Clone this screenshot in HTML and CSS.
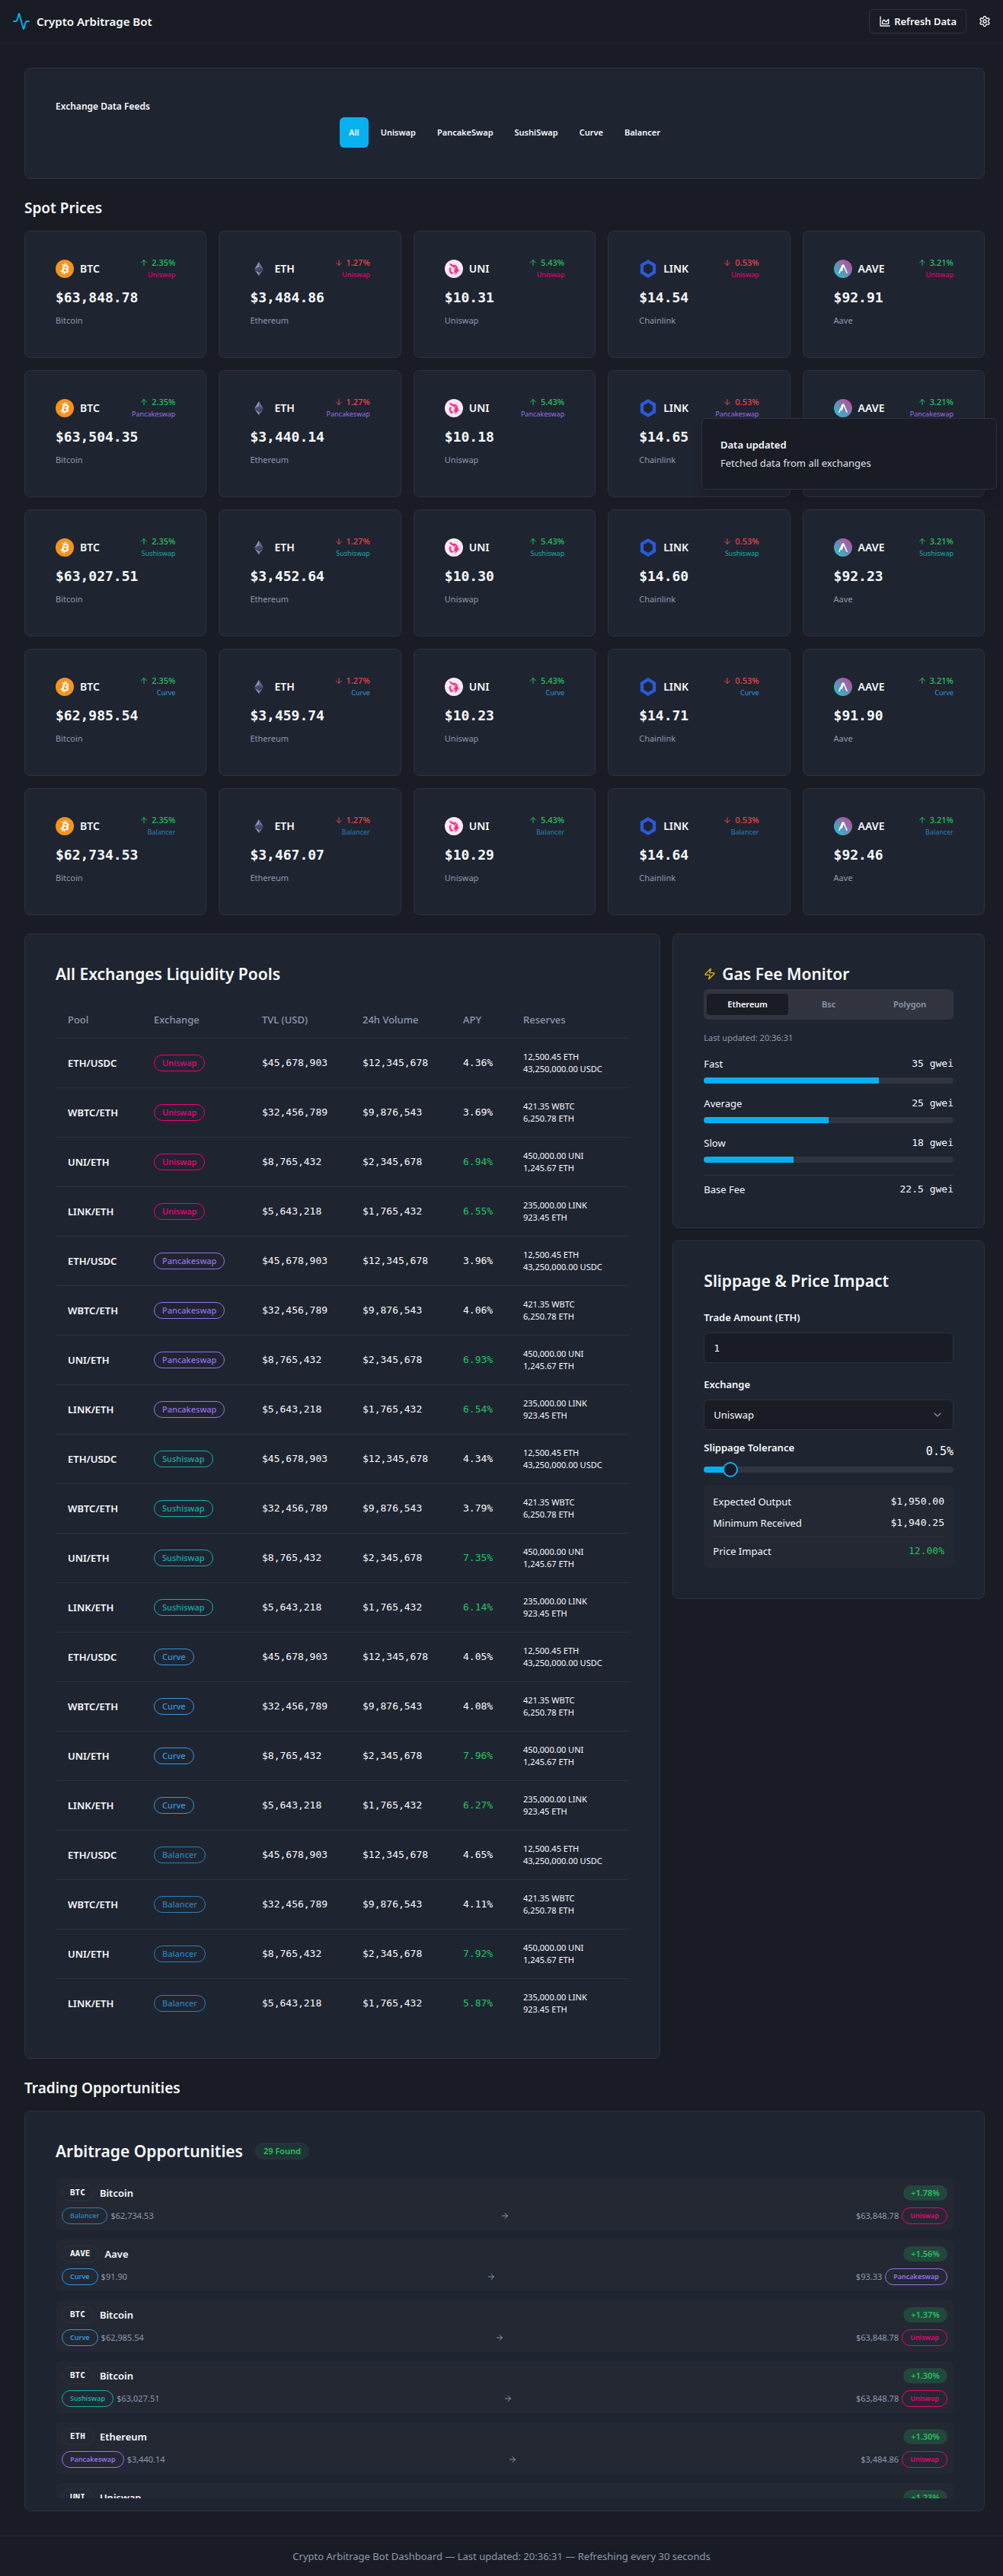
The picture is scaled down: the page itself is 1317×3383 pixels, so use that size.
FILE: index.html
```html
<!DOCTYPE html>
<html lang="en">
<head>
<meta charset="utf-8">
<meta name="viewport" content="width=device-width, initial-scale=1">
<title>Crypto Arbitrage Bot</title>
<link rel="stylesheet" href="styles.css">
</head>
<body>
<svg class="sprite" aria-hidden="true">
  <defs>
    <linearGradient id="aave-fill" x1="0.15" y1="0.85" x2="0.85" y2="0.15">
      <stop offset="0" stop-color="#2ebac6"/><stop offset="1" stop-color="#b6509e"/>
    </linearGradient>
  </defs>
  <symbol id="coin-btc" viewBox="0 0 32 32">
    <circle cx="16" cy="16" r="16" fill="#f7931a"/>
    <path fill="#fff" d="M23.189 14.02c.314-2.096-1.283-3.223-3.465-3.975l.708-2.84-1.728-.43-.69 2.765c-.454-.114-.92-.22-1.385-.326l.695-2.783L15.596 6l-.708 2.839c-.376-.086-.746-.17-1.104-.26l.002-.009-2.384-.595-.46 1.846s1.283.294 1.256.312c.7.175.826.638.805 1.006l-.806 3.235c.048.012.11.03.18.057l-.183-.045-1.13 4.532c-.086.212-.303.531-.793.41.018.025-1.256-.313-1.256-.313l-.858 1.978 2.25.561c.418.105.828.215 1.231.318l-.715 2.872 1.727.43.708-2.84c.472.127.93.245 1.378.357l-.706 2.828 1.728.43.715-2.866c2.948.558 5.164.333 6.097-2.333.752-2.146-.037-3.385-1.588-4.192 1.13-.26 1.98-1.003 2.207-2.538zm-3.95 5.538c-.533 2.147-4.148.986-5.32.695l.95-3.805c1.172.293 4.929.872 4.37 3.11zm.535-5.569c-.487 1.953-3.495.96-4.47.717l.86-3.45c.975.243 4.118.696 3.61 2.733z"/>
  </symbol>
  <symbol id="coin-eth" viewBox="0 0 24 24">
    <path fill="#8a92b2" d="M12 2.7 6.3 12.2 12 15.6z"/>
    <path fill="#62688f" d="m12 2.7 5.7 9.5-5.7 3.4z"/>
    <path fill="#454a75" d="m6.3 12.2 5.7-2.6 5.7 2.6-5.7 3.4z"/>
    <path fill="#8a92b2" d="m6.3 13.3 5.7 8v-4.6z"/>
    <path fill="#62688f" d="m17.7 13.3-5.7 8v-4.6z"/>
  </symbol>
  <symbol id="coin-uni" viewBox="0 0 24 24">
    <circle cx="12" cy="12" r="12" fill="#ffeaf4"/>
    <path fill="#ff2d87" d="M5.5 4.8c3 .9 4.200 1.200 5.800 2.400 1.300-.7 3-.4 3.700.5 1.600.7 2.100 2.200 2 3.800l1.600 3.300-1.200 1.200-1.100-.2c.3 2.300-1.500 3.900-3.800 4.200 1.300-1 1.900-2.200 1.400-3.500-1 1.300-2.700 1.700-4 .9 1.800-.1 3.100-1 3.100-2.500l-2.300.3 2.800-2.100c-.6-2.700-2.500-4.100-4.700-4.300C7.600 8 6.600 6.700 5.500 4.800z"/>
    <path fill="#ff2d87" d="M7 10.200c.9 0 1.600.3 2.100.9-.9.500-1.300 1.400-1.100 2.600.3 1.900 1.600 3 3.400 3.300-.4 1.300-1.500 2-3 1.900-1.500-1-2.300-2.500-2.300-4.300-.6-.6-.6-1.500-.2-2.100z"/>
    <path fill="#ffeaf4" d="m13.200 9.200 1.700.6.300 1-1.600-.3z"/>
  </symbol>
  <symbol id="coin-link" viewBox="0 0 24 24">
    <path fill="none" stroke="#2a5ada" stroke-width="4.300" d="M12 2.500 20 7.200v9.600l-8 4.700-8-4.700V7.200z"/>
  </symbol>
  <symbol id="coin-aave" viewBox="0 0 24 24">
    <circle cx="12" cy="12" r="12" fill="url(#aave-fill)"/>
    <path fill="none" stroke="#fff" stroke-width="1.600" stroke-linecap="round" d="M7 17.200 11.300 7.300h1.400L17 17.200M8 13.600h2.800M12 8.500l-1.900 6"/>
  </symbol>
  <symbol id="i-up" viewBox="0 0 24 24"><path d="m5 12 7-7 7 7M12 19V5"/></symbol>
  <symbol id="i-down" viewBox="0 0 24 24"><path d="M12 5v14M19 12l-7 7-7-7"/></symbol>
  <symbol id="i-right" viewBox="0 0 24 24"><path d="M5 12h14M12 5l7 7-7 7"/></symbol>
</svg>

<header class="topbar">
  <div class="brand">
    <svg class="icon icon-24" viewBox="0 0 24 24" aria-hidden="true"><path d="M22 12h-2.480a2 2 0 0 0-1.930 1.460l-2.350 8.360a.25.25 0 0 1-.48 0L9.240 2.180a.25.25 0 0 0-.48 0l-2.350 8.360A2 2 0 0 1 4.490 12H2"/></svg>
    <h1>Crypto Arbitrage Bot</h1>
  </div>
  <div class="actions">
    <button class="btn-outline" type="button">
      <svg class="icon icon-16" viewBox="0 0 24 24" aria-hidden="true"><path d="M3 3v18h18"/><path d="M7 12v5h12V8l-5 5-4-4Z"/></svg>
      Refresh Data
    </button>
    <button class="btn-icon" type="button" aria-label="Settings">
      <svg class="icon icon-16" viewBox="0 0 24 24" aria-hidden="true"><path d="M12.220 2h-.44a2 2 0 0 0-2 2v.18a2 2 0 0 1-1 1.730l-.43.25a2 2 0 0 1-2 0l-.15-.08a2 2 0 0 0-2.730.73l-.22.38a2 2 0 0 0 .73 2.730l.15.1a2 2 0 0 1 1 1.720v.51a2 2 0 0 1-1 1.740l-.15.09a2 2 0 0 0-.73 2.730l.22.38a2 2 0 0 0 2.730.73l.15-.08a2 2 0 0 1 2 0l.43.25a2 2 0 0 1 1 1.730V20a2 2 0 0 0 2 2h.44a2 2 0 0 0 2-2v-.18a2 2 0 0 1 1-1.730l.43-.25a2 2 0 0 1 2 0l.15.08a2 2 0 0 0 2.730-.73l.22-.39a2 2 0 0 0-.73-2.730l-.15-.08a2 2 0 0 1-1-1.740v-.5a2 2 0 0 1 1-1.740l.15-.09a2 2 0 0 0 .73-2.730l-.22-.38a2 2 0 0 0-2.730-.73l-.15.08a2 2 0 0 1-2 0l-.43-.25a2 2 0 0 1-1-1.730V4a2 2 0 0 0-2-2z"/><circle cx="12" cy="12" r="3"/></svg>
    </button>
  </div>
</header>

<main class="page">
  <section class="card feeds">
    <h2 class="feeds-title">Exchange Data Feeds</h2>
    <div class="feed-tabs">
      <button class="feed-tab active" type="button">All</button>
      <button class="feed-tab" type="button">Uniswap</button>
      <button class="feed-tab" type="button">PancakeSwap</button>
      <button class="feed-tab" type="button">SushiSwap</button>
      <button class="feed-tab" type="button">Curve</button>
      <button class="feed-tab" type="button">Balancer</button>
    </div>
  </section>

  <section class="block">
    <h2 class="section-title">Spot Prices</h2>
    <div class="spot-grid" id="spots"></div>
  </section>

  <div class="columns">
    <section class="card pools">
      <h3 class="card-title">All Exchanges Liquidity Pools</h3>
      <table class="pool-table">
        <colgroup><col class="c-pool"><col class="c-exchange"><col class="c-usd"><col class="c-usd"><col class="c-apy"><col></colgroup>
        <thead><tr><th>Pool</th><th>Exchange</th><th>TVL (USD)</th><th>24h Volume</th><th>APY</th><th>Reserves</th></tr></thead>
        <tbody id="pools"></tbody>
      </table>
    </section>

    <div class="side">
      <section class="card gas">
        <h3 class="card-title with-icon">
          <svg class="icon icon-16 zap" viewBox="0 0 24 24" aria-hidden="true"><path d="M4 14a1 1 0 0 1-.78-1.630l9.900-10.200a.5.5 0 0 1 .86.46l-1.920 6.020A1 1 0 0 0 13 10h7a1 1 0 0 1 .78 1.630l-9.900 10.200a.5.5 0 0 1-.86-.46l1.920-6.020A1 1 0 0 0 11 14z"/></svg>
          Gas Fee Monitor
        </h3>
        <div class="gas-tabs">
          <button class="gas-tab active" type="button">Ethereum</button>
          <button class="gas-tab" type="button">Bsc</button>
          <button class="gas-tab" type="button">Polygon</button>
        </div>
        <p class="updated">Last updated: 20:36:31</p>
        <div class="gas-rows">
          <div class="gas-row"><div class="kv"><span>Fast</span><span class="mono">35 gwei</span></div><div class="bar"><div class="bar-fill" style="width:70%"></div></div></div>
          <div class="gas-row"><div class="kv"><span>Average</span><span class="mono">25 gwei</span></div><div class="bar"><div class="bar-fill" style="width:50%"></div></div></div>
          <div class="gas-row"><div class="kv"><span>Slow</span><span class="mono">18 gwei</span></div><div class="bar"><div class="bar-fill" style="width:36%"></div></div></div>
          <div class="kv kv-total"><span>Base Fee</span><span class="mono">22.5 gwei</span></div>
        </div>
      </section>

      <section class="card slippage">
        <h3 class="card-title">Slippage &amp; Price Impact</h3>
        <div class="form">
          <div class="field">
            <label for="amount">Trade Amount (ETH)</label>
            <input class="control mono" id="amount" type="text" inputmode="decimal" value="1">
          </div>
          <div class="field">
            <label for="exchange">Exchange</label>
            <div class="select-wrap">
              <select class="control" id="exchange"><option>Uniswap</option><option>PancakeSwap</option><option>SushiSwap</option><option>Curve</option><option>Balancer</option></select>
              <svg class="icon icon-16 chevron" viewBox="0 0 24 24" aria-hidden="true"><path d="m6 9 6 6 6-6"/></svg>
            </div>
          </div>
          <div class="field">
            <div class="tolerance"><label for="tolerance">Slippage Tolerance</label><output class="mono" for="tolerance">0.5%</output></div>
            <input class="slider" id="tolerance" type="range" min="0.1" max="5" step="0.1" value="0.5">
          </div>
          <div class="summary">
            <div class="kv"><span>Expected Output</span><span class="mono">$1,950.00</span></div>
            <div class="kv"><span>Minimum Received</span><span class="mono">$1,940.25</span></div>
            <div class="kv kv-total"><span>Price Impact</span><span class="mono good">12.00%</span></div>
          </div>
        </div>
      </section>
    </div>
  </div>

  <section class="block">
    <h2 class="section-title">Trading Opportunities</h2>
    <div class="card trades">
      <div class="trades-head">
        <h3 class="card-title">Arbitrage Opportunities</h3>
        <span class="pill found">29 Found</span>
      </div>
      <div class="trade-list" id="trades"></div>
    </div>
  </section>
</main>

<footer class="footer">Crypto Arbitrage Bot Dashboard — Last updated: 20:36:31 — Refreshing every 30 seconds</footer>

<div class="toast" role="status">
  <strong>Data updated</strong>
  <span>Fetched data from all exchanges</span>
</div>
<script src="app.js"></script>
</body>
</html>
```
FILE: app.js
```js
const EXCHANGES = ["Uniswap", "Pancakeswap", "Sushiswap", "Curve", "Balancer"];

const COINS = [
  { sym: "BTC", name: "Bitcoin", change: 2.35, prices: ["63,848.78", "63,504.35", "63,027.51", "62,985.54", "62,734.53"] },
  { sym: "ETH", name: "Ethereum", change: -1.27, prices: ["3,484.86", "3,440.14", "3,452.64", "3,459.74", "3,467.07"] },
  { sym: "UNI", name: "Uniswap", change: 5.43, prices: ["10.31", "10.18", "10.30", "10.23", "10.29"] },
  { sym: "LINK", name: "Chainlink", change: -0.53, prices: ["14.54", "14.65", "14.60", "14.71", "14.64"] },
  { sym: "AAVE", name: "Aave", change: 3.21, prices: ["92.91", "93.33", "92.23", "91.90", "92.46"] }
];

const POOLS = [
  { pair: "ETH/USDC", tvl: "$45,678,903", vol: "$12,345,678", res: ["12,500.45 ETH", "43,250,000.00 USDC"], apy: ["4.36", "3.96", "4.34", "4.05", "4.65"] },
  { pair: "WBTC/ETH", tvl: "$32,456,789", vol: "$9,876,543", res: ["421.35 WBTC", "6,250.78 ETH"], apy: ["3.69", "4.06", "3.79", "4.08", "4.11"] },
  { pair: "UNI/ETH", tvl: "$8,765,432", vol: "$2,345,678", res: ["450,000.00 UNI", "1,245.67 ETH"], apy: ["6.94", "6.93", "7.35", "7.96", "7.92"] },
  { pair: "LINK/ETH", tvl: "$5,643,218", vol: "$1,765,432", res: ["235,000.00 LINK", "923.45 ETH"], apy: ["6.55", "6.54", "6.14", "6.27", "5.87"] }
];

const TRADES = [
  ["BTC", "Bitcoin", "Balancer", "$62,734.53", "$63,848.78", "Uniswap", "1.78"],
  ["AAVE", "Aave", "Curve", "$91.90", "$93.33", "Pancakeswap", "1.56"],
  ["BTC", "Bitcoin", "Curve", "$62,985.54", "$63,848.78", "Uniswap", "1.37"],
  ["BTC", "Bitcoin", "Sushiswap", "$63,027.51", "$63,848.78", "Uniswap", "1.30"],
  ["ETH", "Ethereum", "Pancakeswap", "$3,440.14", "$3,484.86", "Uniswap", "1.30"],
  ["UNI", "Uniswap", "Pancakeswap", "$10.18", "$10.31", "Uniswap", "1.23"]
];

const icon = (id) => `<svg class="icon icon-12" aria-hidden="true"><use href="#i-${id}"/></svg>`;
const badge = (ex, size) => `<span class="pill ${size} ex-${ex.toLowerCase()}">${ex}</span>`;

document.getElementById("spots").innerHTML = EXCHANGES.map((ex, row) => COINS.map((c) => `
  <article class="card spot">
    <div class="spot-head">
      <div class="spot-coin"><svg class="coin" aria-hidden="true"><use href="#coin-${c.sym.toLowerCase()}"/></svg><h3>${c.sym}</h3></div>
      <div class="spot-side">
        <span class="change ${c.change > 0 ? "good" : "bad"}">${icon(c.change > 0 ? "up" : "down")}${Math.abs(c.change).toFixed(2)}%</span>
        <span class="spot-ex ex-${ex.toLowerCase()}">${ex}</span>
      </div>
    </div>
    <div class="spot-price mono">$${c.prices[row]}</div>
    <div class="spot-name">${c.name}</div>
  </article>`).join("")).join("");

document.getElementById("pools").innerHTML = EXCHANGES.map((ex, i) => POOLS.map((p) => `
  <tr><td class="pair">${p.pair}</td><td>${badge(ex, "pill-md")}</td><td class="mono">${p.tvl}</td><td class="mono">${p.vol}</td>
  <td class="mono ${p.apy[i] > 5 ? "good" : ""}">${p.apy[i]}%</td><td class="reserves"><div>${p.res[0]}</div><div>${p.res[1]}</div></td></tr>`).join("")).join("");

document.getElementById("trades").innerHTML = TRADES.map(([sym, name, from, buy, sell, to, gain]) => `
  <div class="trade">
    <div class="trade-row">
      <div class="trade-coin"><span class="pill sym mono">${sym}</span><span class="trade-name">${name}</span></div>
      <span class="gain">+${gain}%</span>
    </div>
    <div class="trade-row trade-path">
      <div class="leg">${badge(from, "pill-sm")}<span>${buy}</span></div>
      ${icon("right")}
      <div class="leg"><span>${sell}</span>${badge(to, "pill-sm")}</div>
    </div>
  </div>`).join("");
```
FILE: styles.css
```css
:root {
  --bg: #191c24;
  --card: #1f2431;
  --border: #2f323c;
  --muted: #32353f;
  --panel: #232833;
  --fg: #f8fafc;
  --dim: #8e9aae;
  --primary: #09b0ef;
  --good: #22c55e;
  --bad: #e94848;
}

* { box-sizing: border-box; }

body {
  margin: 0;
  position: relative;
  background: var(--bg);
  color: var(--fg);
  font: 400 13px/20px "Noto Sans", "Open Sans", sans-serif;
}

h1, h2, h3, p { margin: 0; font-weight: 600; }
button, input, select { font: inherit; color: inherit; }
button { cursor: pointer; }

.mono { font-family: "DejaVu Sans Mono", "Liberation Mono", monospace; }
.good { color: var(--good); }
.bad { color: var(--bad); }

.sprite { position: absolute; width: 0; height: 0; }
.icon {
  flex: none;
  fill: none;
  stroke: currentColor;
  stroke-width: 2;
  stroke-linecap: round;
  stroke-linejoin: round;
}
.icon-12 { width: 12px; height: 12px; }
.icon-16 { width: 16px; height: 16px; }
.icon-24 { width: 24px; height: 24px; }

.ex-uniswap { color: #f0007a; }
.ex-pancakeswap { color: #9a70e8; }
.ex-sushiswap { color: #0fb0ac; }
.ex-curve { color: #3498db; }
.ex-balancer { color: #2980b9; }

/* Header */
.topbar {
  display: flex;
  align-items: center;
  justify-content: space-between;
  padding: 12px 16px;
  border-bottom: 1px solid #222632;
}
.brand, .actions { display: flex; align-items: center; }
.brand { gap: 8px; }
.brand .icon { color: var(--primary); }
.brand h1 { font-size: 15px; line-height: 28px; }
.actions { gap: 16px; padding-right: 0; }
.btn-outline {
  display: flex;
  align-items: center;
  gap: 4px;
  height: 32px;
  padding: 0 12px;
  border: 1px solid var(--border);
  border-radius: 6px;
  background: transparent;
  font-weight: 600;
}
.btn-icon { display: flex; padding: 0; border: 0; background: transparent; }

/* Page frame */
.page {
  display: flex;
  flex-direction: column;
  gap: 24px;
  padding: 32px 24px 32px 32px;
}
.card {
  padding: 40px;
  border: 1px solid var(--border);
  border-radius: 8px;
  background: var(--card);
}
.card-title { font-size: 21px; line-height: 24px; }
.section-title { margin-bottom: 16px; font-size: 19px; line-height: 28px; }

/* Exchange filter */
.feeds-title { font-size: 12px; line-height: 20px; }
.feed-tabs { display: flex; justify-content: center; gap: 4px; margin-top: 4px; }
.feed-tab {
  height: 40px;
  padding: 0 12px;
  border: 0;
  border-radius: 6px;
  background: transparent;
  font-size: 11px;
  font-weight: 600;
}
.feed-tab.active { background: var(--primary); }

/* Spot prices */
.spot-grid { display: grid; grid-template-columns: repeat(5, minmax(0, 1fr)); gap: 16px; }
.spot { padding: 32px 40px 40px; }
.spot-head { display: flex; align-items: center; justify-content: space-between; }
.spot-coin { display: flex; align-items: center; gap: 8px; }
.coin { width: 24px; height: 24px; }
.spot-coin h3 { font-size: 14px; line-height: 24px; }
.spot-side { display: flex; flex-direction: column; align-items: flex-end; }
.change { display: flex; align-items: center; gap: 4px; font-size: 11px; line-height: 17px; font-weight: 500; }
.spot-ex { font-size: 9px; line-height: 16px; }
.spot-price { margin-top: 8px; font-size: 18px; line-height: 28px; font-weight: 700; }
.spot-name { margin-top: 8px; font-size: 11px; line-height: 16px; color: var(--dim); }

/* Pools and side panels */
.columns { display: grid; grid-template-columns: repeat(3, minmax(0, 1fr)); gap: 16px; align-items: start; }
.pools { grid-column: span 2; }
.side { display: flex; flex-direction: column; gap: 16px; }

.pool-table { width: 100%; margin-top: 24px; border-collapse: separate; border-spacing: 0; table-layout: fixed; }
.c-pool { width: 113px; }
.c-exchange { width: 142px; }
.c-usd { width: 132px; }
.c-apy { width: 79px; }
.pool-table th {
  height: 49px;
  padding: 0 16px;
  border-bottom: 1px solid var(--border);
  color: var(--dim);
  font-weight: 500;
  text-align: left;
}
.pool-table td { height: 65px; padding: 0 16px; border-bottom: 1px solid var(--border); white-space: nowrap; }
.pool-table tr:last-child td { height: 64px; border-bottom: 0; }
.pool-table .pair { font-weight: 600; }
.pool-table .reserves { font-size: 11px; line-height: 16px; }

.pill {
  display: inline-flex;
  align-items: center;
  height: 22px;
  padding: 0 10px;
  border: 1px solid currentColor;
  border-radius: 11px;
  line-height: 16px;
}
.pill-md { font-size: 11px; font-weight: 500; }
.pill-sm { font-size: 9px; font-weight: 600; }

/* Gas monitor */
.with-icon { display: flex; align-items: center; gap: 8px; }
.zap { color: #eab308; }
.gas-tabs {
  display: grid;
  grid-template-columns: repeat(3, 1fr);
  align-items: center;
  height: 40px;
  margin-top: 8px;
  padding: 0 4px;
  border-radius: 6px;
  background: var(--muted);
}
.gas-tab {
  height: 28px;
  padding: 0;
  border: 0;
  border-radius: 4px;
  background: transparent;
  color: var(--dim);
  font-size: 11px;
  font-weight: 600;
}
.gas-tab.active { background: var(--bg); color: var(--fg); }
.updated { margin: 16px 0; color: var(--dim); font-size: 11px; line-height: 16px; font-weight: 400; }
.gas-rows { display: flex; flex-direction: column; gap: 16px; }
.gas-row { display: flex; flex-direction: column; gap: 8px; }
.kv { display: flex; justify-content: space-between; }
.kv-total { padding-top: 8px; border-top: 1px solid var(--border); }
.bar { height: 8px; overflow: hidden; border-radius: 4px; background: var(--muted); }
.bar-fill { height: 100%; background: var(--primary); }

/* Slippage form */
.form { display: flex; flex-direction: column; gap: 16px; margin-top: 24px; }
.field { display: flex; flex-direction: column; gap: 8px; }
.field label { line-height: 24px; font-weight: 600; }
.control {
  width: 100%;
  height: 40px;
  padding: 0 12px;
  border: 1px solid var(--border);
  border-radius: 6px;
  background: var(--bg);
  appearance: none;
}
.control.mono { font-family: "DejaVu Sans Mono", "Liberation Mono", monospace; }
.select-wrap { position: relative; }
.chevron { position: absolute; top: 12px; right: 13px; opacity: 0.5; pointer-events: none; }
.tolerance { display: flex; justify-content: space-between; }
.tolerance label { line-height: 14px; }
.tolerance output { font-size: 15px; line-height: 24px; }
.slider {
  --filled: 35px;
  width: 100%;
  height: 8px;
  margin: 0;
  border-radius: 4px;
  background: linear-gradient(to right, var(--primary) var(--filled), var(--muted) var(--filled));
  appearance: none;
}
.slider::-webkit-slider-thumb {
  width: 20px;
  height: 20px;
  border: 2px solid var(--primary);
  border-radius: 50%;
  background: var(--bg);
  appearance: none;
}
.summary { display: flex; flex-direction: column; gap: 8px; padding: 12px; border-radius: 6px; background: var(--panel); }

/* Arbitrage list */
.trades { padding-bottom: 16px; }
.trades-head { display: flex; align-items: center; gap: 16px; }
.found {
  border-color: var(--border);
  background: #1f3436;
  color: var(--good);
  font-size: 11px;
  font-weight: 600;
}
.trade-list {
  display: flex;
  flex-direction: column;
  gap: 12px;
  height: 420px;
  margin-top: 24px;
  overflow: hidden;
}
.trade { display: flex; flex: none; flex-direction: column; gap: 8px; padding: 8px; border-radius: 6px; background: var(--panel); }
.trade-row { display: flex; align-items: center; justify-content: space-between; height: 22px; }
.trade-coin { display: flex; align-items: center; gap: 8px; }
.sym { border-color: var(--border); font-size: 11px; font-weight: 700; }
.trade-name { font-weight: 600; }
.gain {
  padding: 0 10px;
  border-radius: 10px;
  background: #23463d;
  color: var(--good);
  font-size: 11px;
  line-height: 20px;
  font-weight: 600;
}
.trade-path { color: var(--dim); font-size: 11px; }
.leg { display: flex; align-items: center; gap: 4px; }

.footer {
  padding: 16px;
  border-top: 1px solid #222632;
  color: var(--dim);
  text-align: center;
}

/* Notification above the page */
.toast {
  position: absolute;
  top: 549px;
  right: 8px;
  display: flex;
  flex-direction: column;
  gap: 4px;
  width: 388px;
  padding: 24px;
  border: 1px solid var(--border);
  border-radius: 6px;
  background: var(--bg);
  box-shadow: 0 10px 15px rgba(0, 0, 0, 0.15);
}
.toast strong { font-weight: 600; }
.toast span { color: #dfe2e6; }
```
